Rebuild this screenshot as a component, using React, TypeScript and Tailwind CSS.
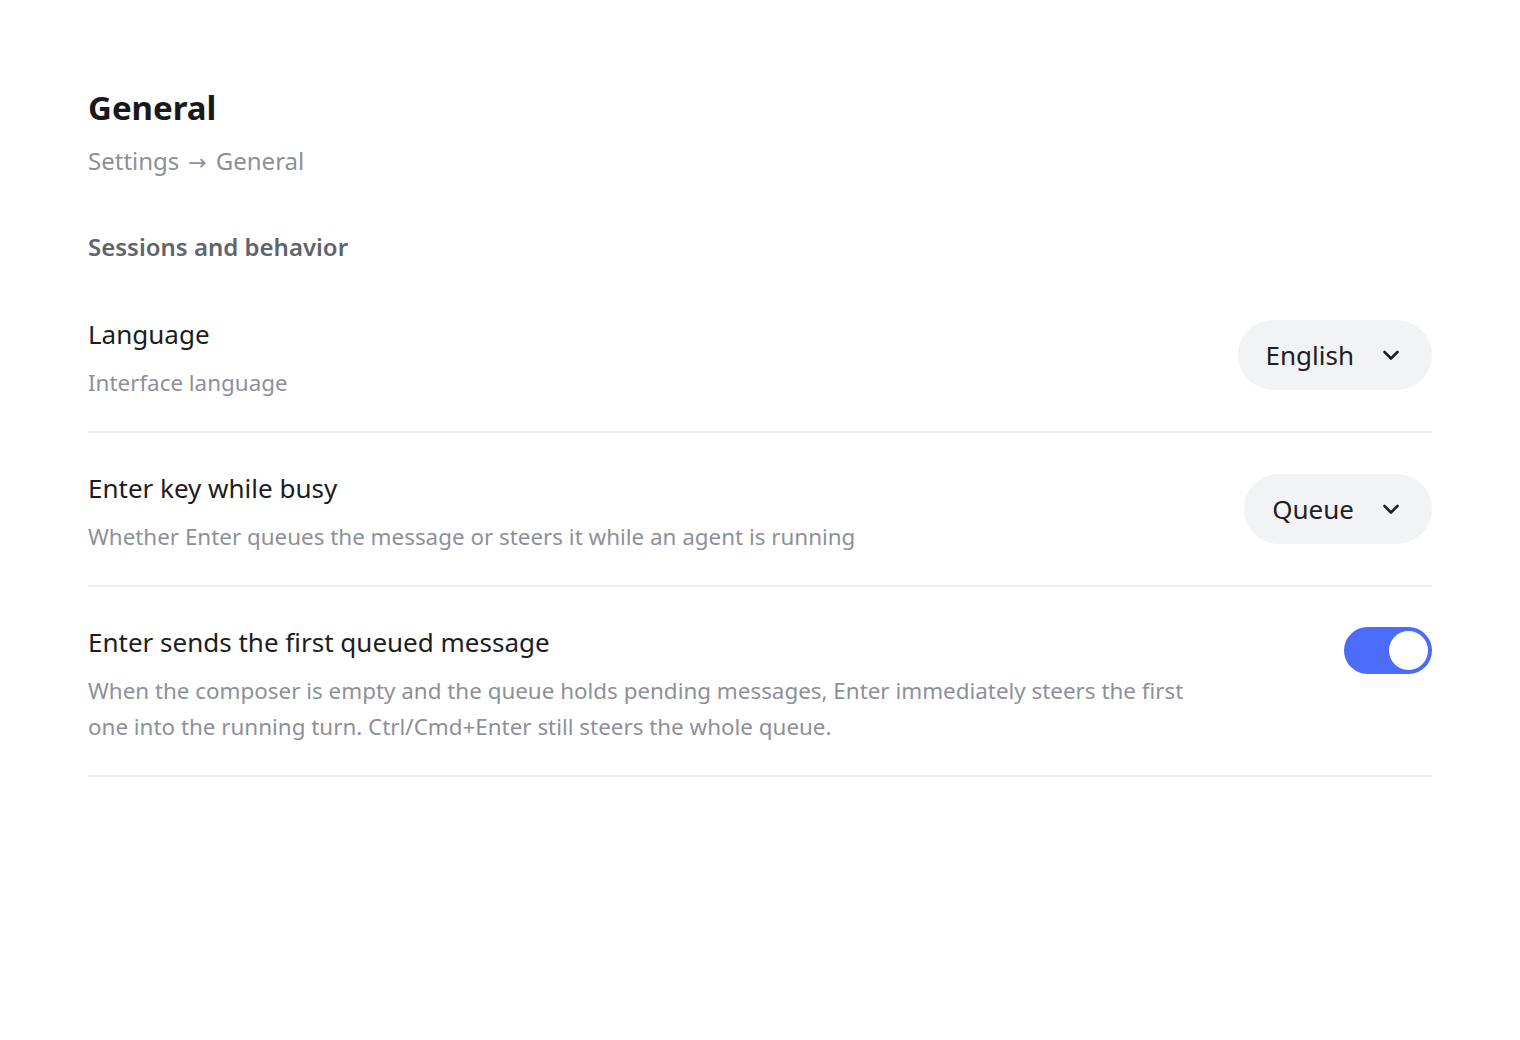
import React, { useState } from "react";

function Chevron() {
  return (
    <svg width="18" height="12" viewBox="0 0 18 12" fill="none" stroke="#1f2023" strokeWidth="2.6" strokeLinecap="round" strokeLinejoin="round">
      <path d="M2.5 3l6.5 6.5 6.5-6.5" />
    </svg>
  );
}

function SelectButton({ label }: { label: string }) {
  return (
    <button className="mt-[4px] flex h-[70px] items-center gap-[28px] rounded-full bg-[#f2f3f5] pl-[28px] pr-[32px] text-[26px] text-[#1f2023]">
      <span>{label}</span>
      <Chevron />
    </button>
  );
}

function Toggle() {
  const [on, setOn] = useState(true);
  return (
    <button
      onClick={() => setOn(!on)}
      className={`mt-[3px] flex h-[47px] w-[88px] shrink-0 items-center rounded-full px-[4px] ${on ? "justify-end bg-[#4a6cf9]" : "justify-start bg-[#d4d6dc]"}`}
    >
      <span className="block h-[39px] w-[39px] rounded-full bg-white" />
    </button>
  );
}

function Row({ title, desc, control, first }: { title: string; desc: string; control: React.ReactNode; first?: boolean }) {
  return (
    <div className={`flex items-start justify-between gap-[40px] border-b-2 border-[#ececf0] pb-[30px] ${first ? "pt-[38px]" : "pt-[37px]"}`}>
      <div className="flex max-w-[1110px] flex-col gap-[13px]">
        <div className="text-[26px] leading-[36px] text-[#1c1d1f]">{title}</div>
        <div className="text-[22.4px] leading-[36px] text-[#8e9099]">{desc}</div>
      </div>
      {control}
    </div>
  );
}

export default function App() {
  return (
    <div className="min-h-screen bg-white" style={{ fontFamily: '"Noto Sans", "Open Sans", sans-serif' }}>
      <div className="px-[88px] pt-[86px]">
        <h1 className="text-[33px] font-bold leading-[44px] text-[#18191b]">General</h1>
        <div className="mt-[13px] text-[24px] leading-[36px] text-[#8e9099]">
          Settings<span style={{ fontFamily: '"DejaVu Sans", sans-serif' }} className="mx-[9px] text-[22px]">→</span>General
        </div>
        <div className="mt-[48px] text-[24px] font-semibold leading-[36px] text-[#60646c]">Sessions and behavior</div>
        <div className="mt-[13px]">
          <Row first title="Language" desc="Interface language" control={<SelectButton label="English" />} />
          <Row title="Enter key while busy" desc="Whether Enter queues the message or steers it while an agent is running" control={<SelectButton label="Queue" />} />
          <Row
            title="Enter sends the first queued message"
            desc="When the composer is empty and the queue holds pending messages, Enter immediately steers the first one into the running turn. Ctrl/Cmd+Enter still steers the whole queue."
            control={<Toggle />}
          />
        </div>
      </div>
    </div>
  );
}
